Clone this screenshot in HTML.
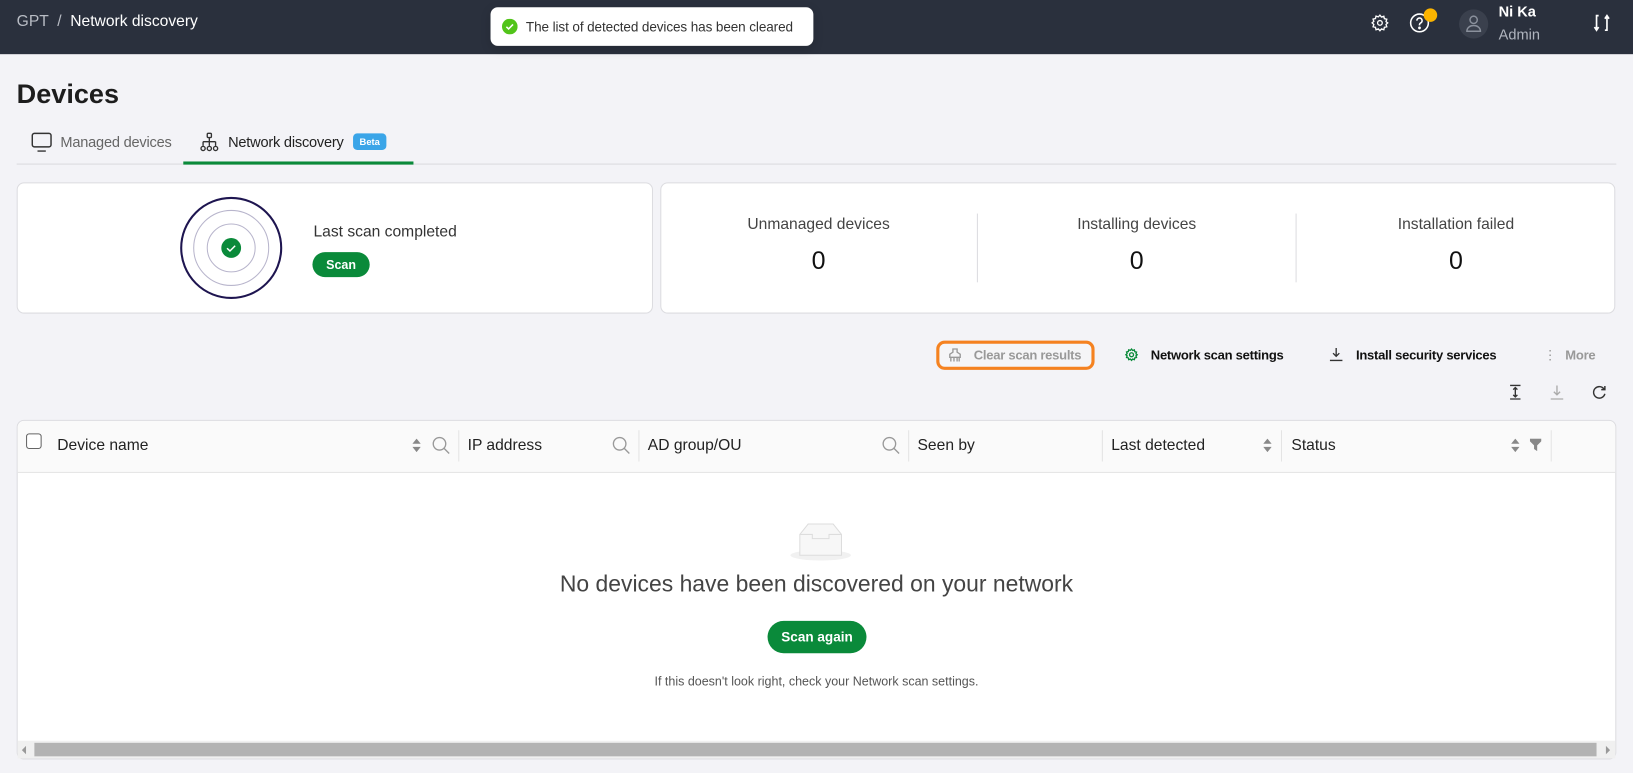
<!DOCTYPE html>
<html><head><meta charset="utf-8"><style>
*{box-sizing:border-box;margin:0;padding:0}
html,body{width:1633px;height:773px;overflow:hidden;background:#f3f3f7;font-family:"Liberation Sans",sans-serif}
#w{position:absolute;left:0;top:0;width:1568px;height:742px;transform:scale(1.04145,1.0418);transform-origin:0 0}
.a{position:absolute}
.hdr{left:0;top:0;width:1568px;height:52px;background:#2a303d}
.card{background:#fff;border:1px solid #dcdce0;border-radius:7px}
.btn{background:#0a8a3a;color:#fff;font-weight:bold;border-radius:14px;text-align:center}
.th{top:419px;font-size:15px;color:#222}
.dv{top:413px;width:1px;height:30px;background:#e4e4e4}
.act{font-size:12.5px;font-weight:bold;letter-spacing:-0.25px}
</style></head><body><div id="w">
<div class="a hdr"></div>
<div class="a" style="left:16px;top:12px;font-size:15px;color:#fff"><span style="color:#b8bcc4">GPT</span> <span style="color:#b8bcc4">&nbsp;/&nbsp;</span> Network discovery</div>
<div class="a" style="left:471px;top:7px;width:310px;height:37px;background:#fff;border-radius:7px;box-shadow:0 3px 10px rgba(0,0,0,.15)"></div>
<svg class="a" style="left:482px;top:18px" width="15" height="15" viewBox="0 0 16 16"><circle cx="8" cy="8" r="8" fill="#52c41a"/><path d="M4.5 8.2l2.3 2.2 4.5-4.6" stroke="#fff" stroke-width="1.6" fill="none"/></svg>
<div class="a" style="left:505px;top:18px;font-size:13px;color:#333;letter-spacing:-0.1px">The list of detected devices has been cleared</div>
<svg class="a" style="left:1316px;top:13px" width="18" height="18" viewBox="0 0 24 24" fill="none" stroke="#fff" stroke-width="1.7"><circle cx="12" cy="12" r="3"/><path d="M12 2l2 2.5 3-1 .7 3.1 3.1.7-1 3L22 12l-2.2 1.9 1 3-3.1.7-.7 3.1-3-1L12 22l-2-2.3-3 1-.7-3.1-3.1-.7 1-3L2 12l2.2-1.9-1-3 3.1-.7.7-3.1 3 1z"/></svg>
<svg class="a" style="left:1353px;top:12px" width="20" height="20" viewBox="0 0 20 20" fill="none" stroke="#fff" stroke-width="1.5"><circle cx="10" cy="10" r="8.5"/><path d="M7.5 7.8a2.5 2.5 0 1 1 3.5 2.3c-.7.4-1 .8-1 1.6v.6"/><circle cx="10" cy="14.8" r=".6" fill="#fff"/></svg>
<div class="a" style="left:1367px;top:8px;width:13px;height:13px;border-radius:50%;background:#fbb400"></div>
<div class="a" style="left:1401px;top:9px;width:28px;height:28px;border-radius:50%;background:#3a404d"></div>
<svg class="a" style="left:1407px;top:14px" width="16" height="17" viewBox="0 0 16 17" fill="none" stroke="#8a909c" stroke-width="1.4"><circle cx="8" cy="5" r="3.5"/><path d="M1.5 16c0-3.5 3-5.5 6.5-5.5s6.5 2 6.5 5.5z"/></svg>
<div class="a" style="left:1439px;top:3px;font-size:14px;font-weight:bold;color:#fff">Ni Ka</div>
<div class="a" style="left:1439px;top:25px;font-size:14px;color:#b0b5bf">Admin</div>
<svg class="a" style="left:1530px;top:13px" width="16" height="18" viewBox="0 0 16 18" fill="none" stroke="#fff" stroke-width="1.6"><path d="M5 2H3v13M1 13l2 3 2-3M11 16h2V3M15 5l-2-3-2 3"/></svg>

<div class="a" style="left:16px;top:75px;font-size:26px;font-weight:bold;color:#1d1d1d">Devices</div>
<div class="a" style="left:16px;top:157px;width:1536px;height:1px;background:#dadade"></div>
<div class="a" style="left:176px;top:155px;width:221px;height:3px;background:#0a8a3a"></div>
<svg class="a" style="left:30px;top:127px" width="20" height="19" viewBox="0 0 20 19" fill="none" stroke="#333" stroke-width="1.4"><rect x="1" y="1" width="18" height="13" rx="2"/><path d="M6 18h8"/></svg>
<div class="a" style="left:58px;top:128px;font-size:14px;color:#666;letter-spacing:-0.2px">Managed devices</div>
<svg class="a" style="left:192px;top:127px" width="18" height="19" viewBox="0 0 18 19" fill="none" stroke="#333" stroke-width="1.3"><rect x="7" y="1" width="4" height="4" rx="1"/><path d="M9 5v4M3 9h12M3 9v4M9 9v4M15 9v4"/><circle cx="3" cy="15.5" r="2"/><circle cx="9" cy="15.5" r="2"/><circle cx="15" cy="15.5" r="2"/></svg>
<div class="a" style="left:219px;top:128px;font-size:14px;color:#222;letter-spacing:-0.2px">Network discovery</div>
<div class="a" style="left:339px;top:128px;width:32px;height:16px;border-radius:4px;background:#3aa5e8;color:#fff;font-size:9px;font-weight:bold;text-align:center;line-height:16px">Beta</div>

<div class="a card" style="left:16px;top:175px;width:611px;height:126px"></div>
<svg class="a" style="left:172px;top:188px" width="100" height="100" viewBox="0 0 100 100" fill="none"><circle cx="50" cy="50" r="48" stroke="#1e1550" stroke-width="2"/><circle cx="50" cy="50" r="36" stroke="#b8b5cc"/><circle cx="50" cy="50" r="23" stroke="#b8b5cc"/><circle cx="50" cy="50" r="9.5" fill="#0a8a3a"/><path d="M46 50.3l2.8 2.6 5-5" stroke="#fff" stroke-width="1.4"/></svg>
<div class="a" style="left:301px;top:214px;font-size:15px;color:#333">Last scan completed</div>
<div class="a btn" style="left:300px;top:242px;width:55px;height:24px;line-height:24px;font-size:12px">Scan</div>

<div class="a card" style="left:634px;top:175px;width:917px;height:126px"></div>
<div class="a" style="left:938px;top:205px;width:1px;height:66px;background:#dcdce0"></div>
<div class="a" style="left:1244px;top:205px;width:1px;height:66px;background:#dcdce0"></div>
<div class="a" style="left:634px;top:207px;width:304px;text-align:center;font-size:15px;color:#444">Unmanaged devices</div>
<div class="a" style="left:939px;top:207px;width:305px;text-align:center;font-size:15px;color:#444">Installing devices</div>
<div class="a" style="left:1245px;top:207px;width:306px;text-align:center;font-size:15px;color:#444">Installation failed</div>
<div class="a" style="left:634px;top:237px;width:304px;text-align:center;font-size:24px;color:#111">0</div>
<div class="a" style="left:939px;top:237px;width:305px;text-align:center;font-size:24px;color:#111">0</div>
<div class="a" style="left:1245px;top:237px;width:306px;text-align:center;font-size:24px;color:#111">0</div>

<div class="a" style="left:899px;top:327px;width:152px;height:28px;border:3px solid #f58220;border-radius:8px;background:#f5f5f7"></div>
<svg class="a" style="left:910px;top:334px" width="14" height="14" viewBox="0 0 14 14" fill="none" stroke="#999" stroke-width="1.3"><path d="M5 1h4v3l3 2v3H2V6l3-2zM3 9v4M6 9v4M9 9v4M11 9v4"/></svg>
<div class="a act" style="left:935px;top:334px;color:#999">Clear scan results</div>
<svg class="a" style="left:1080px;top:334px" width="13" height="13" viewBox="0 0 24 24" fill="none" stroke="#0a8a3a" stroke-width="2.4"><circle cx="12" cy="12" r="3.5"/><path d="M12 2l2 2.5 3-1 .7 3.1 3.1.7-1 3L22 12l-2.2 1.9 1 3-3.1.7-.7 3.1-3-1L12 22l-2-2.3-3 1-.7-3.1-3.1-.7 1-3L2 12l2.2-1.9-1-3 3.1-.7.7-3.1 3 1z"/></svg>
<div class="a act" style="left:1105px;top:334px;color:#111">Network scan settings</div>
<svg class="a" style="left:1276px;top:333px" width="14" height="14" viewBox="0 0 14 14" fill="none" stroke="#333" stroke-width="1.3"><path d="M7 1v8M4 6l3 3 3-3M1 13h12"/></svg>
<div class="a act" style="left:1302px;top:334px;color:#111">Install security services</div>
<div class="a" style="left:1482px;top:333px;font-size:13px;color:#999">⋮</div>
<div class="a act" style="left:1503px;top:334px;color:#999">More</div>
<svg class="a" style="left:1448px;top:369px" width="14" height="15" viewBox="0 0 14 15" fill="none" stroke="#333" stroke-width="1.3"><path d="M2 1h10M2 14h10M7 3v9M5 5l2-2 2 2M5 10l2 2 2-2"/></svg>
<svg class="a" style="left:1488px;top:369px" width="14" height="15" viewBox="0 0 14 15" fill="none" stroke="#aaa" stroke-width="1.3"><path d="M7 1v9M4 7l3 3 3-3M1 14h12"/></svg>
<svg class="a" style="left:1528px;top:369px" width="15" height="15" viewBox="0 0 15 15" fill="none" stroke="#333" stroke-width="1.4"><path d="M12.5 5A5.5 5.5 0 1 0 13 9M13 1.5v3.5H9.5"/></svg>

<div class="a card" style="left:16px;top:403px;width:1536px;height:326px;overflow:hidden">
<div style="height:50px;background:#fafafa;border-bottom:1px solid #e6e6e6"></div>
</div>
<div class="a" style="left:25px;top:416px;width:15px;height:15px;border:1.3px solid #666;border-radius:3px;background:#fff"></div>
<div class="a th" style="left:55px">Device name</div>
<div class="a th" style="left:449px">IP address</div>
<div class="a th" style="left:622px">AD group/OU</div>
<div class="a th" style="left:881px">Seen by</div>
<div class="a th" style="left:1067px">Last detected</div>
<div class="a th" style="left:1240px">Status</div>
<div class="a dv" style="left:440px"></div><div class="a dv" style="left:613px"></div><div class="a dv" style="left:872px"></div><div class="a dv" style="left:1058px"></div><div class="a dv" style="left:1230px"></div><div class="a dv" style="left:1489px"></div>
<svg width="0" height="0" style="position:absolute"><defs><g id="s"><path d="M0 5l4-5 4 5z M0 8l4 5 4-5z" fill="#888"/></g><g id="q" fill="none" stroke="#999" stroke-width="1.3"><circle cx="7" cy="7" r="6"/><path d="M11.3 11.3l5 5"/></g></defs></svg>
<svg class="a" style="left:396px;top:421px" width="8" height="13"><use href="#s"/></svg>
<svg class="a" style="left:1213px;top:421px" width="8" height="13"><use href="#s"/></svg>
<svg class="a" style="left:1451px;top:421px" width="8" height="13"><use href="#s"/></svg>
<svg class="a" style="left:415px;top:419px" width="17" height="17"><use href="#q"/></svg>
<svg class="a" style="left:588px;top:419px" width="17" height="17"><use href="#q"/></svg>
<svg class="a" style="left:847px;top:419px" width="17" height="17"><use href="#q"/></svg>
<svg class="a" style="left:1469px;top:421px" width="11" height="12" viewBox="0 0 11 12"><path d="M0 0h11v2.5L7 6.5V12L4 10V6.5L0 2.5z" fill="#888"/></svg>

<svg class="a" style="left:758px;top:500px" width="60" height="40" viewBox="0 0 60 40"><ellipse cx="30" cy="33" rx="29" ry="5" fill="#f1f1f1"/><path d="M10 13L18 3h24l8 10v20H10z" fill="#f7f7f7" stroke="#ddd"/><path d="M10 13h12v4h16v-4h12" fill="none" stroke="#ddd"/></svg>
<div class="a" style="left:16px;top:548px;width:1536px;text-align:center;font-size:22px;color:#444">No devices have been discovered on your network</div>
<div class="a btn" style="left:737px;top:596px;width:95px;height:31px;line-height:31px;font-size:13px;border-radius:16px">Scan again</div>
<div class="a" style="left:16px;top:647px;width:1536px;text-align:center;font-size:12px;color:#555">If this doesn't look right, check your Network scan settings.</div>
<div class="a" style="left:17px;top:711px;width:1534px;height:17px;background:#f0f0f0"></div>
<div class="a" style="left:33px;top:713px;width:1500px;height:13px;background:#b3b3b3"></div>
<div class="a" style="left:21px;top:716px;width:0;height:0;border:4px solid transparent;border-right-color:#999;border-left:0"></div>
<div class="a" style="left:1542px;top:716px;width:0;height:0;border:4px solid transparent;border-left-color:#999;border-right:0"></div>
</div></body></html>
